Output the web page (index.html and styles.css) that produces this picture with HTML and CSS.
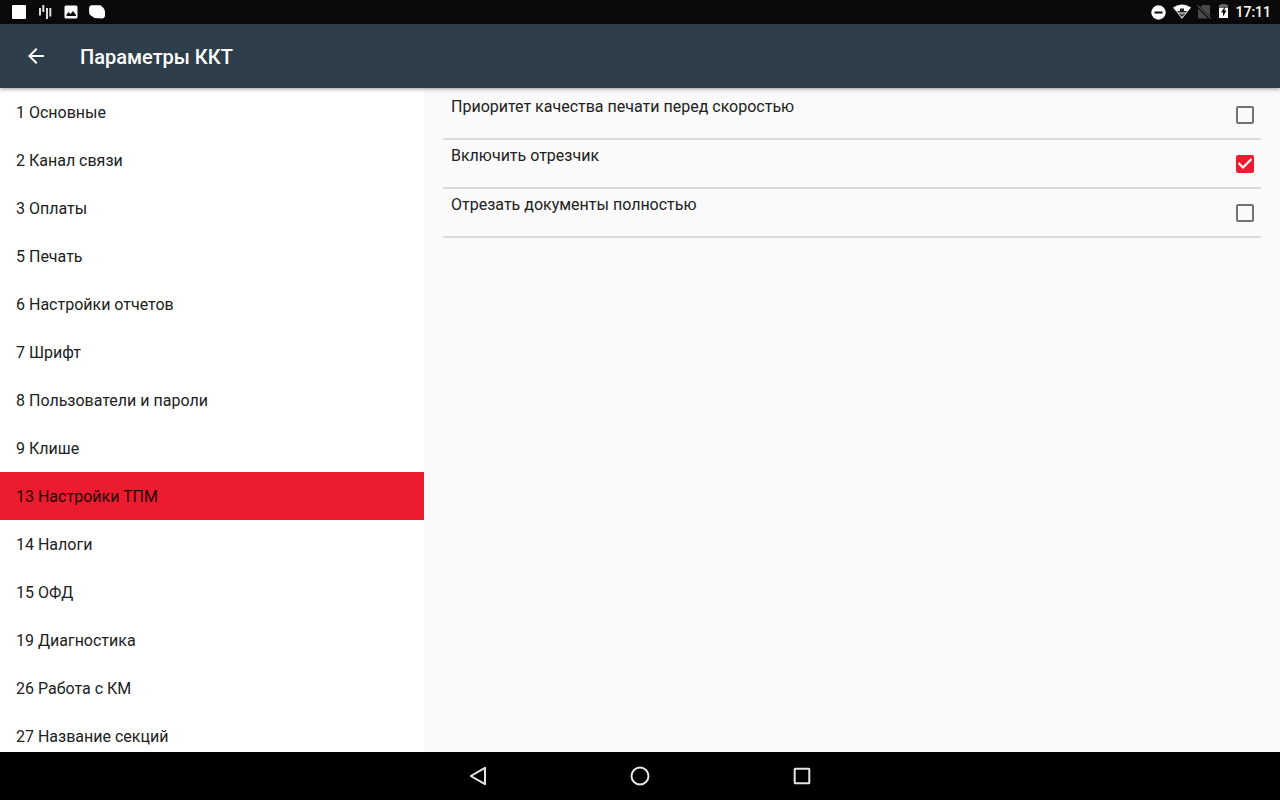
FILE: index.html
```html
<!DOCTYPE html>
<html lang="ru">
<head>
    <meta charset="UTF-8">
    <meta name="viewport" content="width=device-width, initial-scale=1.0">
    <title>Параметры ККТ</title>
    <link rel="stylesheet" href="styles.css">
</head>
<body>
    <div class="status-bar">
        <div class="status-icons">
            <svg width="18" height="24" viewBox="0 0 18 24"><rect x="2" y="5" width="14" height="14" rx="1" fill="#fff"/></svg>
            <svg width="18" height="24" viewBox="0 0 18 24" stroke="#ddd" stroke-width="2">
                <path d="M4 8v7.500M7.300 5v7M11 8v11M14.300 8v8.500"/>
            </svg>
            <svg width="18" height="24" viewBox="0 0 18 24">
                <rect x="2.500" y="5.500" width="13" height="13" rx="1.500" fill="#fff"/>
                <path d="M4.500 16v-1.500l2-2.500 2 2 2.500-3 3 4v1z" fill="#0a0a0a"/>
            </svg>
            <svg width="18" height="24" viewBox="0 0 18 24"><path d="M3 5.200H12.500L15.500 8Q17 10 17 12V16Q16.500 18.300 14.500 18.500L6.500 18L1.500 14.500Q0.500 9 1.500 6.500z" fill="#fff"/></svg>
        </div>
        <div class="status-system">
            <svg width="18" height="24" viewBox="0 0 18 24">
                <circle cx="9.500" cy="12.500" r="7.200" fill="#fff"/>
                <path d="M5.500 12.500h8" stroke="#0a0a0a" stroke-width="2"/>
            </svg>
            <svg width="22" height="24" viewBox="0 0 22 24">
                <path d="M2 7.500Q11 1.500 20 7.500L11 18.800z" fill="#fff"/>
                <path d="M9 8.500h4v2.500h2.500v1.500h-9V11H9zM7.500 13.500h7L11 17z" fill="#222"/>
                <path d="M9.500 14h3" stroke="#aaa"/>
            </svg>
            <svg width="14" height="24" viewBox="0 0 14 24">
                <path d="M5.500 5H12q1 0 1 1v10.500L3.500 7zM1 8.500l10 10H2q-1 0-1-1z" fill="#484848"/>
                <path d="M0.500 5.500L13.500 18.500" stroke="#505050" stroke-width="1.200"/>
            </svg>
            <svg width="16" height="24" viewBox="0 0 16 24">
                <path d="M4 5.500h2V4h5v1.500h2V18H4z" fill="#fff"/>
                <path d="M4 5.500h2V4h5v1.500h2V8H4z" fill="#666"/>
                <path d="M10 6.500L6 12.500h2v4l3.500-6H9.500z" fill="#0a0a0a"/>
            </svg>
            <span class="clock">17:11</span>
        </div>
    </div>

    <header class="toolbar">
        <button type="button" class="back" aria-label="Назад">
            <svg width="24" height="24" viewBox="0 0 24 24"><path d="M20 11H7.830l5.590-5.590L12 4l-8 8 8 8 1.410-1.410L7.830 13H20z" fill="#fff"/></svg>
        </button>
        <h1>Параметры ККТ</h1>
    </header>

    <main class="content">
        <nav class="menu">
            <a href="#">1 Основные</a>
            <a href="#">2 Канал связи</a>
            <a href="#">3 Оплаты</a>
            <a href="#">5 Печать</a>
            <a href="#">6 Настройки отчетов</a>
            <a href="#">7 Шрифт</a>
            <a href="#">8 Пользователи и пароли</a>
            <a href="#">9 Клише</a>
            <a href="#" class="active">13 Настройки ТПМ</a>
            <a href="#">14 Налоги</a>
            <a href="#">15 ОФД</a>
            <a href="#">19 Диагностика</a>
            <a href="#">26 Работа с КМ</a>
            <a href="#">27 Название секций</a>
        </nav>

        <section class="settings">
            <div class="setting">
                <label for="quality">Приоритет качества печати перед скоростью</label>
                <input type="checkbox" id="quality">
            </div>
            <div class="setting">
                <label for="cutter">Включить отрезчик</label>
                <input type="checkbox" id="cutter" checked>
            </div>
            <div class="setting">
                <label for="full-cut">Отрезать документы полностью</label>
                <input type="checkbox" id="full-cut">
            </div>
        </section>
    </main>

    <footer class="nav-bar">
        <button type="button" aria-label="Назад">
            <svg width="24" height="24" viewBox="0 0 24 24"><path d="M19 3.800v16.400L4.800 12z"/></svg>
        </button>
        <button type="button" aria-label="Домой">
            <svg width="24" height="24" viewBox="0 0 24 24"><circle cx="12" cy="12" r="8.500"/></svg>
        </button>
        <button type="button" aria-label="Недавние">
            <svg width="24" height="24" viewBox="0 0 24 24"><rect x="4.700" y="4.700" width="14.600" height="14.600" rx="0.500"/></svg>
        </button>
    </footer>
</body>
</html>
```

FILE: styles.css
```css
* {
    box-sizing: border-box;
}

body {
    margin: 0;
    height: 100vh;
    display: flex;
    flex-direction: column;
    overflow: hidden;
    font-family: Roboto, sans-serif;
    font-size: 16px;
    line-height: 20px;
    color: #212121;
    background-color: #fafafa;
}

svg {
    display: block;
}

button {
    padding: 0;
    border: none;
    background: none;
    cursor: pointer;
}

/* Status bar */
.status-bar {
    flex: none;
    display: flex;
    justify-content: space-between;
    height: 24px;
    padding: 0 9px 0 10px;
    background-color: #0a0a0a;
}

.status-icons {
    display: flex;
    gap: 8px;
}

.status-system {
    display: flex;
    gap: 4px;
}

.clock {
    font-size: 14px;
    font-weight: 500;
    line-height: 24px;
    color: #fff;
}

/* Toolbar */
.toolbar {
    position: relative;
    flex: none;
    display: flex;
    align-items: center;
    gap: 32px;
    height: 64px;
    padding: 0 24px;
    background-color: #2e3f4b;
    box-shadow: 0 1px 4px rgba(0, 0, 0, 0.4);
}

.toolbar h1 {
    margin: 0;
    padding-top: 2px;
    font-size: 20px;
    font-weight: 500;
    line-height: 24px;
    color: #fff;
}

/* Content */
.content {
    flex: 1;
    min-height: 0;
    display: grid;
    grid-template-columns: 53fr 107fr;
}

.menu {
    overflow: hidden;
    background-color: #fff;
}

.menu a {
    display: block;
    padding: 15px 16px 13px;
    color: #212121;
    text-decoration: none;
}

.menu a.active {
    background-color: #ed1b2f;
    color: #210406;
}

.settings {
    padding: 3px 19px;
}

.setting {
    display: flex;
    justify-content: space-between;
    height: 49px;
    padding: 6px 7px 0 8px;
    border-bottom: 2px solid #dbdbdb;
}

.setting input {
    appearance: none;
    width: 18px;
    height: 18px;
    margin: 9px 0 0;
    border: 2px solid #737373;
    border-radius: 2px;
}

.setting input:checked {
    display: grid;
    place-items: center;
    border-color: #ed1b2f;
    background-color: #ed1b2f;
}

.setting input:checked::before {
    content: "";
    width: 14px;
    height: 14px;
    background-color: #fff;
    clip-path: polygon(5px 9px, 13px 1px, 14px 3px, 5px 12px, 0 7px, 1px 5px);
}

/* Bottom navigation */
.nav-bar {
    position: relative;
    flex: none;
    display: flex;
    justify-content: center;
    align-items: center;
    gap: 138px;
    height: 48px;
    background-color: #000;
}

.nav-bar svg {
    fill: none;
    stroke: #e6e6e6;
    stroke-width: 2;
    stroke-linejoin: round;
}
```
